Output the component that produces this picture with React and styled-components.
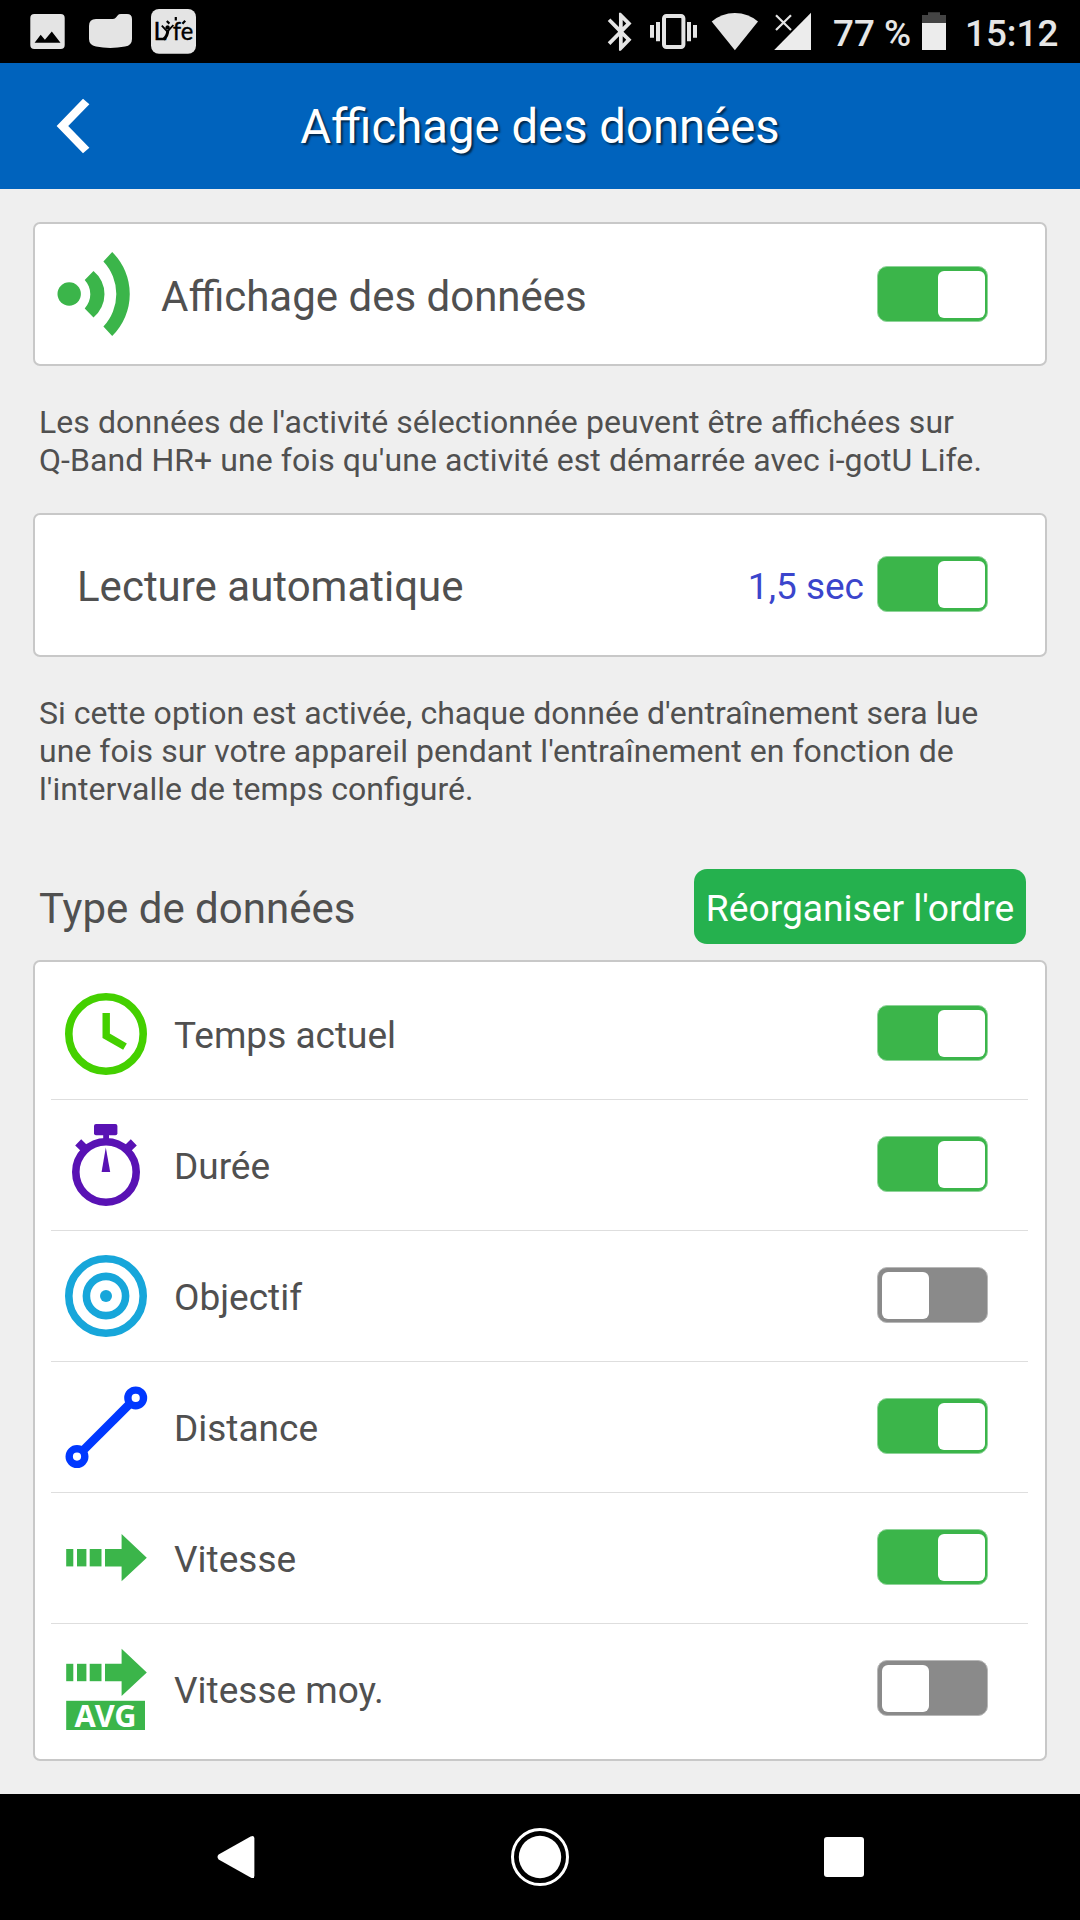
import { useState } from 'react';
import styled, { createGlobalStyle } from 'styled-components';

const GREEN = '#3bb54a';

function ClockIcon() {
  return (
    <Icon viewBox="0 0 84 84" fill="none" stroke="#44d000">
      <circle cx="42" cy="42" r="37.2" strokeWidth="7.6" />
      <path d="M42.2 21V43.8L61 54.6" strokeWidth="7.4" />
    </Icon>
  );
}

function StopwatchIcon() {
  return (
    <Icon viewBox="0 0 84 84" fill="#5912b4" stroke="none">
      <rect x="30" y="1" width="23.4" height="11.2" rx="2" />
      <rect x="39.2" y="11" width="5.8" height="6" />
      <path d="M14.2 19.4L22 27M69.8 19.4L62 27" stroke="#5912b4" strokeWidth="8.6" />
      <circle cx="42" cy="49" r="30.2" fill="none" stroke="#5912b4" strokeWidth="7.6" />
      <path d="M41.8 24.5L46.2 49H37.6Z" />
    </Icon>
  );
}

function TargetIcon() {
  return (
    <Icon viewBox="0 0 84 84" fill="none" stroke="#17a6da" strokeWidth="7.6">
      <circle cx="42" cy="42" r="37.2" />
      <circle cx="42" cy="42" r="19.6" />
      <circle cx="42" cy="42" r="6" fill="#17a6da" stroke="none" />
    </Icon>
  );
}

function DistanceIcon() {
  return (
    <Icon viewBox="0 0 84 84" fill="none" stroke="#0038ff">
      <circle cx="71.7" cy="12.9" r="7.8" strokeWidth="7.4" />
      <circle cx="13" cy="71.6" r="7.8" strokeWidth="7.4" />
      <path d="M66 18.6L18.8 65.8" strokeWidth="8.6" />
    </Icon>
  );
}

function Arrow({ y = 0 }) {
  return (
    <g transform={`translate(0 ${y})`}>
      <rect x="2.2" y="33" width="7.1" height="17.4" />
      <rect x="13" y="33" width="9.4" height="17.4" />
      <rect x="25.7" y="33" width="11.8" height="17.4" />
      <path d="M41 33H57.6V18L82.8 41.7L57.6 65.2V50.4H41Z" />
    </g>
  );
}

function SpeedIcon() {
  return (
    <Icon viewBox="0 0 84 84" fill={GREEN}>
      <Arrow />
    </Icon>
  );
}

function AverageSpeedIcon() {
  return (
    <Icon viewBox="0 0 84 84" fill={GREEN}>
      <Arrow y={-16.2} />
      <rect x="2.2" y="53.8" width="78.8" height="29.2" />
      <AvgText x="10.6" y="79.6" textLength="62" lengthAdjust="spacingAndGlyphs">
        AVG
      </AvgText>
    </Icon>
  );
}

function BroadcastIcon() {
  return (
    <svg width="76" height="86" viewBox="56 251 76 86" fill={GREEN}>
      <circle cx="69.2" cy="294" r="11.7" />
      <path d="M93.5 271A30 30 0 0 1 93.5 317.4L84.7 308.4A20.8 20.8 0 0 0 84.7 280Z" />
      <path d="M112.2 252A59 59 0 0 1 112.2 336L103.4 326.6A47.6 47.6 0 0 0 103.4 261.4Z" />
    </svg>
  );
}

function NotificationIcons() {
  return (
    <svg width="170" height="63" viewBox="30 0 170 63" fill="#e4e4e4">
      <rect x="30.3" y="14" width="34.4" height="35" rx="4" />
      <path d="M34.6 42.7L40.7 34.8L44.9 39.8L51.8 31.6L60.5 42.7Z" fill="#000" />
      <path d="M89 26Q89 19 96 19H113Q115 19 116.4 17L117.6 15.4Q118.6 14 121 14H127Q132 14 132 19V39Q132 45.4 125 46.6Q110 49.4 96 46.6Q89 45 89 39Z" />
      <rect x="151" y="9" width="45" height="44.8" rx="8" />
      <g fill="#000" stroke="#000" strokeWidth="0.4">
        <LogoText x="153.4" y="40.2">L</LogoText>
        <LogoText x="172.8" y="40.2" textLength="20.4" lengthAdjust="spacingAndGlyphs">
          fe
        </LogoText>
        <circle cx="167.6" cy="27.6" r="2" />
      </g>
      <g fill="none" stroke="#000">
        <path d="M161.8 25.6L167.4 31.6L173.4 25" strokeWidth="1.8" />
        <path d="M167.8 30.4Q167.6 36 163.6 39.4" strokeWidth="3" />
        <path d="M166.8 21L169.4 23.6M175.8 17V20.6M185.2 20.8L182.4 23.8" strokeWidth="2.2" />
      </g>
    </svg>
  );
}

function SystemIcons() {
  return (
    <svg width="206" height="63" viewBox="606 0 206 63" fill="#e4e4e4">
      <g transform="translate(598.4 8.9) scale(1.87 1.9)">
        <path d="M17.71 7.71L12 2h-1v7.59L6.41 5 5 6.41 10.59 12 5 17.59 6.41 19 11 14.41V22h1l5.71-5.71-4.3-4.29 4.3-4.29zM13 5.83l1.88 1.88L13 9.59V5.83zm1.88 10.46L13 18.17v-3.76l1.88 1.88z" />
      </g>
      <rect x="664" y="16" width="19.4" height="31" rx="2.4" fill="none" stroke="#e4e4e4" strokeWidth="4" />
      <path d="M650 25h4v12.7h-4zM656 22h4v19.3h-4zM687 22h4v19.3h-4zM693 25h4v12.7h-4z" />
      <path d="M711.7 21.6Q721.6 13 734.9 13T758 21.6L734.9 50.2Z" />
      <path d="M774.2 50L811 12.8V50Z" fill="#ececec" />
      <path d="M776 15.2L791 30M791 15.2L776 30" stroke="#e4e4e4" strokeWidth="2.2" />
    </svg>
  );
}

function Switch({ defaultOn, lift = 0 }) {
  const [on, setOn] = useState(defaultOn);

  return (
    <Track type="button" role="switch" aria-checked={on} $on={on} $lift={lift} onClick={() => setOn(!on)}>
      <Thumb />
    </Track>
  );
}

const DATA_TYPES = [
  { name: 'Temps actuel', icon: ClockIcon, on: true },
  { name: 'Durée', icon: StopwatchIcon, on: true },
  { name: 'Objectif', icon: TargetIcon, on: false },
  { name: 'Distance', icon: DistanceIcon, on: true },
  { name: 'Vitesse', icon: SpeedIcon, on: true },
  { name: 'Vitesse moy.', icon: AverageSpeedIcon, on: false },
];

function App() {
  return (
    <Screen>
      <GlobalStyle />
      <StatusBar>
        <NotificationIcons />
        <StatusGroup>
          <SystemIcons />
          <Percent>77 %</Percent>
          <svg width="24" height="63" viewBox="922 0 24 63">
            <path d="M922 15h6v-2.8h12V15h6v9h-24z" fill="#444" />
            <rect x="922" y="23" width="24" height="27" fill="#ececec" />
          </svg>
          <Time>15:12</Time>
        </StatusGroup>
      </StatusBar>

      <Header>
        <BackButton type="button" aria-label="Retour">
          <svg width="34" height="56" viewBox="56 98 34 56" fill="#fff">
            <path d="M56.6 126L83 98.8L89.4 104.2L68.2 126L89.4 147.8L83 153.2Z" />
          </svg>
        </BackButton>
        <Title>Affichage des données</Title>
      </Header>

      <Content>
        <Card>
          <BroadcastIcon />
          <Label $left={29} $top={4}>Affichage des données</Label>
          <Switch defaultOn />
        </Card>
        <Hint $tracking={0.075}>
          Les données de l'activité sélectionnée peuvent être affichées sur
          <br />
          Q-Band HR+ une fois qu'une activité est démarrée avec i-gotU Life.
        </Hint>

        <Card>
          <Label $left={21} $top={2}>Lecture automatique</Label>
          <Interval>1,5 sec</Interval>
          <Switch defaultOn lift={2} />
        </Card>
        <Hint $tracking={0.035}>
          Si cette option est activée, chaque donnée d'entraînement sera lue
          <br />
          une fois sur votre appareil pendant l'entraînement en fonction de
          <br />
          l'intervalle de temps configuré.
        </Hint>

        <SectionHeader>
          <SectionTitle>Type de données</SectionTitle>
          <ReorderButton type="button">Réorganiser l'ordre</ReorderButton>
        </SectionHeader>
        <List>
          {DATA_TYPES.map(({ name, icon: TypeIcon, on }) => (
            <Row key={name}>
              <TypeIcon />
              <RowLabel>{name}</RowLabel>
              <Switch defaultOn={on} lift={2} />
            </Row>
          ))}
        </List>
      </Content>

      <NavBar>
        <svg width="40" height="60" viewBox="216 1827 40 60" fill="#fff">
          <path d="M218.6 1854.6L250.6 1836.6Q254.4 1834.6 254.4 1838.6V1875.4Q254.4 1879.4 250.6 1877.4L218.6 1859.4Q216.4 1857 218.6 1854.6Z" />
        </svg>
        <svg width="60" height="60" viewBox="0 0 60 60" fill="#fff">
          <circle cx="30" cy="30" r="27.5" fill="none" stroke="#fff" strokeWidth="3" />
          <circle cx="30" cy="30" r="21.2" />
        </svg>
        <RecentSquare />
      </NavBar>
    </Screen>
  );
}

export default App;

const GlobalStyle = createGlobalStyle`
  * {
    box-sizing: border-box;
  }

  body {
    margin: 0;
    background: #efefef;
  }

  button {
    padding: 0;
    border: 0;
    font: inherit;
  }

  svg {
    display: block;
    flex: none;
  }
`;

const Screen = styled.div`
  display: flex;
  flex-direction: column;
  width: 1080px;
  height: 1920px;
  overflow: hidden;
  background: #efefef;
  color: #505050;
  font-family: Roboto, 'Noto Sans', sans-serif;
  white-space: nowrap;
`;

const StatusBar = styled.div`
  display: flex;
  flex: none;
  justify-content: space-between;
  height: 63px;
  padding: 0 21px 0 30px;
  background: #000;
`;

const StatusGroup = styled.div`
  display: flex;
  color: #e6e6e6;
  font-size: 36.8px;
  font-weight: 500;
  line-height: 67px;
`;

const Percent = styled.span`
  width: 110px;
  padding-left: 21px;
`;

const Time = styled.span`
  width: 113px;
  padding-left: 19px;
`;

const LogoText = styled.text`
  font-family: Lato, sans-serif;
  font-size: 25px;
`;

const AvgText = styled.text`
  fill: #fff;
  font-family: 'Noto Sans', sans-serif;
  font-size: 29.5px;
  font-weight: 700;
`;

const Header = styled.header`
  display: grid;
  flex: none;
  grid-template-columns: 120px 1fr 120px;
  align-items: center;
  height: 126px;
  background: #0063bd;
`;

const BackButton = styled.button`
  padding-left: 56px;
  background: none;
`;

const Title = styled.h1`
  margin: 0;
  padding-top: 2px;
  color: #fff;
  font-size: 47.3px;
  font-weight: 400;
  line-height: 56px;
  text-align: center;
  text-shadow: 2px 2px 2px rgba(0, 0, 0, 0.6);
`;

const Content = styled.main`
  display: flex;
  flex: 1;
  flex-direction: column;
  padding: 33px 33px 0;
`;

const Card = styled.section`
  display: flex;
  flex: none;
  align-items: center;
  height: 144px;
  padding: 0 57px 0 21px;
  border: 2px solid #c8c8c8;
  border-radius: 7px;
  background: #fff;
`;

const Label = styled.span`
  flex: 1;
  padding: ${({ $top, $left }) => `${$top}px 0 0 ${$left}px`};
  font-size: 42px;
`;

const Interval = styled.span`
  padding: 3px 13px 0 0;
  color: #3b45cc;
  font-size: 37px;
`;

const Track = styled.button`
  display: flex;
  flex: none;
  justify-content: ${({ $on }) => ($on ? 'flex-end' : 'flex-start')};
  width: 111px;
  height: 56px;
  margin-bottom: ${({ $lift }) => $lift}px;
  padding: 3.5px 2.5px 3.5px 3.5px;
  border: 1px solid ${({ $on }) => ($on ? '#8fd499' : '#b8b8b8')};
  border-radius: 10px;
  background: ${({ $on }) => ($on ? GREEN : '#8a8a8a')};
`;

const Thumb = styled.span`
  width: 47px;
  height: 47px;
  border-radius: 6px;
  background: #fff;
`;

const Hint = styled.p`
  margin: 0;
  padding: 37px 6px 34px;
  font-size: 32px;
  line-height: 38px;
  letter-spacing: ${({ $tracking }) => $tracking}px;
  /* letter-spacing turns the ffi and fi ligatures off otherwise */
  font-feature-settings: 'liga' 1;
`;

const SectionHeader = styled.div`
  display: flex;
  flex: none;
  align-items: center;
  justify-content: space-between;
  height: 75px;
  margin: 27px 21px 16px 6px;
`;

const SectionTitle = styled.h2`
  margin: 0;
  padding-top: 4px;
  font-size: 42px;
  font-weight: 400;
`;

const ReorderButton = styled.button`
  width: 332px;
  height: 75px;
  padding-top: 2px;
  border-radius: 13px;
  background: #25b14e;
  color: #fff;
  font-size: 37.2px;
`;

const List = styled.section`
  flex: none;
  height: 801px;
  padding: 7px 17px 0 16px;
  border: 2px solid #c8c8c8;
  border-radius: 7px;
  background: #fff;
`;

const Row = styled.div`
  display: flex;
  align-items: center;
  height: 131px;
  padding: 0 40px 0 13px;
  border-bottom: 1px solid #dedede;

  &:last-child {
    border-bottom-color: transparent;
  }
`;

const Icon = styled.svg`
  width: 84px;
  height: 84px;
  overflow: visible;
`;

const RowLabel = styled.span`
  flex: 1;
  padding: 3px 0 0 26px;
  font-size: 37px;
`;

const NavBar = styled.nav`
  display: flex;
  flex: none;
  align-items: center;
  justify-content: space-between;
  height: 126px;
  padding: 0 216px;
  background: #000;
`;

const RecentSquare = styled.span`
  width: 40px;
  height: 40px;
  border-radius: 3px;
  background: #fff;
`;
